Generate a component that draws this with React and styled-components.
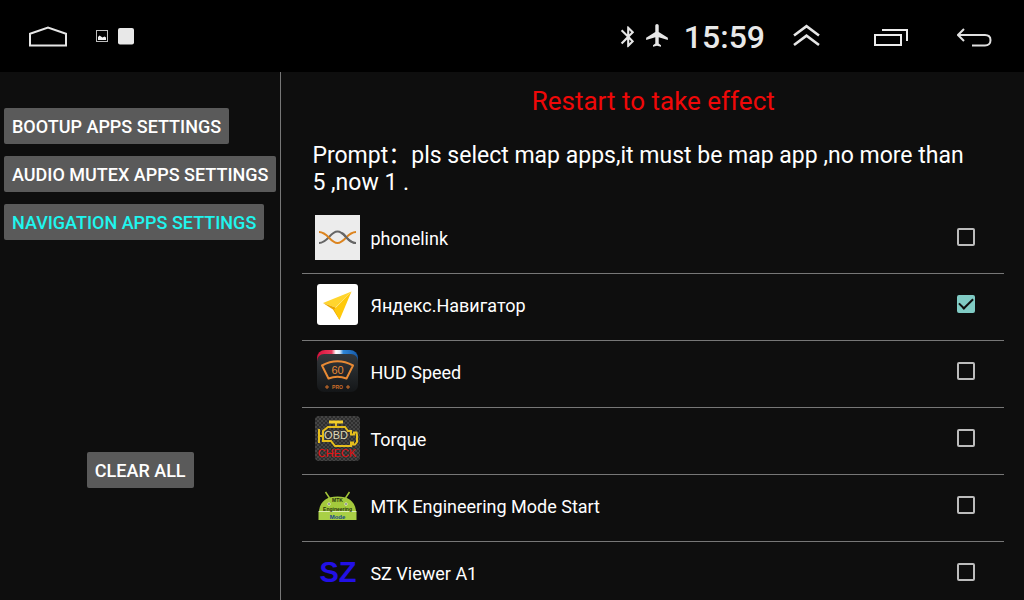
import React, { useState } from "react";
import styled, { createGlobalStyle } from "styled-components";

const TABS = ["Bootup apps settings", "Audio mutex apps settings", "Navigation apps settings"];

const APPS = [
  { id: "phonelink", name: "phonelink", Icon: PhonelinkIcon },
  { id: "yandex", name: "Яндекс.Навигатор", Icon: NavigatorIcon },
  { id: "hud", name: "HUD Speed", Icon: HudIcon },
  { id: "torque", name: "Torque", Icon: TorqueIcon },
  { id: "mtk", name: "MTK Engineering Mode Start", Icon: MtkIcon },
  { id: "sz", name: "SZ Viewer A1", Icon: SzIcon },
];

function App() {
  const [activeTab, setActiveTab] = useState(2);
  const [selected, setSelected] = useState(["yandex"]);

  const toggle = (id) =>
    setSelected((prev) => (prev.includes(id) ? prev.filter((x) => x !== id) : [...prev, id]));

  return (
    <Page>
      <GlobalStyle />
      <StatusBar />
      <Body>
        <Sidebar>
          {TABS.map((tab, i) => (
            <SettingsButton key={tab} $active={i === activeTab} onClick={() => setActiveTab(i)}>
              {tab}
            </SettingsButton>
          ))}
          <ClearButton onClick={() => setSelected([])}>Clear all</ClearButton>
        </Sidebar>
        <Main>
          <Title>Restart to take effect</Title>
          <Prompt>
            {`Prompt：pls select map apps,it must be map app ,no more than 5 ,now ${selected.length} .`}
          </Prompt>
          <AppList>
            {APPS.map(({ id, name, Icon }) => (
              <AppRow key={id}>
                <AppLabel htmlFor={id}>
                  <Icon />
                  <AppName>{name}</AppName>
                </AppLabel>
                <CheckBox
                  id={id}
                  type="checkbox"
                  checked={selected.includes(id)}
                  onChange={() => toggle(id)}
                />
              </AppRow>
            ))}
          </AppList>
        </Main>
      </Body>
    </Page>
  );
}

export default App;

function StatusBar() {
  return (
    <Bar>
      <NavButton aria-label="Home">
        <svg width="40" height="24" viewBox="0 0 40 24" fill="none" stroke="#e6e6e6" strokeWidth="2">
          <path d="M2 21.500V9.700L20 3.500l18 6.200v11.800z" />
        </svg>
      </NavButton>
      <Notifications>
        <svg width="12" height="24" viewBox="0 0 12 24">
          <rect x="0.500" y="6.500" width="11" height="11" fill="none" stroke="#bdbdbd" />
          <path d="M2 16v-3l1.500-1.500 1.500 1 1.500 1 2-1 1.500 1V16z" fill="#f0f0f0" />
        </svg>
        <svg width="16" height="24" viewBox="0 0 16 24">
          <rect y="4" width="16" height="16.500" rx="2" fill="#e8e8e8" />
        </svg>
      </Notifications>
      <Status>
        <svg width="14" height="24" viewBox="4.200 -0.200 13.300 22.800" fill="#e6e6e6">
          <path d="M17.710 7.710L12 2h-1v7.590L6.410 5 5 6.410 10.590 12 5 17.590 6.410 19 11 14.410V22h1l5.710-5.710-4.300-4.290 4.300-4.290zM13 5.830l1.880 1.880L13 9.590V5.830zm1.880 10.460L13 18.170v-3.760l1.880 1.880z" />
        </svg>
        <svg width="22" height="24" viewBox="2 2 19 21" fill="#e6e6e6">
          <path d="M21 16v-2l-8-5V3.500c0-.830-.670-1.500-1.500-1.500S10 2.670 10 3.500V9l-8 5v2l8-2.500V19l-2 1.500V22l3.500-1 3.500 1v-1.500L13 19v-5.500l8 2.500z" />
        </svg>
        <Clock>15:59</Clock>
      </Status>
      <NavButton aria-label="Expand">
        <svg width="28" height="24" viewBox="0 0 28 24" fill="none" stroke="#e6e6e6" strokeWidth="2.600">
          <path d="M1 11.500L13.500 2.200 26 11.500M1 21L13.500 11.700 26 21" />
        </svg>
      </NavButton>
      <NavButton aria-label="Recent apps">
        <svg width="34" height="24" viewBox="0 0 34 24" fill="none" stroke="#ececec" strokeWidth="2">
          <path d="M1 11h26v10H1zM8 6h25v11" />
        </svg>
      </NavButton>
      <NavButton aria-label="Back">
        <svg width="36" height="24" viewBox="0 0 36 24" fill="none" stroke="#e0e0e0" strokeWidth="2">
          <path d="M7 5L1 11l6 6M1 11h27c3.500 0 5.500 2.200 5.500 5.200s-2 5.300-5.500 5.300H15" />
        </svg>
      </NavButton>
    </Bar>
  );
}

function PhonelinkIcon() {
  return (
    <AppIcon viewBox="0 0 45 45" fill="none" strokeWidth="2.200">
      <rect width="45" height="45" fill="#ececec" />
      <path d="M4 28c9 0 11-11.500 18.500-11.500S32 28 41 28" stroke="#666" />
      <path d="M4 17c9 0 11 11 18.500 11S32 17 41 17" stroke="#dc841f" />
      <path d="M27 18c5 3 6 10 14 10" stroke="#666" />
    </AppIcon>
  );
}

function NavigatorIcon() {
  return (
    <AppIcon viewBox="0 0 45 45">
      <rect x="2" y="2" width="41" height="41" rx="3" fill="#fff" />
      <path d="M36.500 9.500L8 21l12.500 4.500z" fill="#ffd52e" />
      <path d="M8 21l12.500 4.500 4 12.500-6.500-10.500z" fill="#e9a500" />
      <path d="M36.500 9.500L19 27.500l5.500 10.500z" fill="#ffc90b" />
    </AppIcon>
  );
}

function HudIcon() {
  return (
    <AppIcon viewBox="0 0 45 45">
      <defs>
        <linearGradient id="hudLight">
          <stop offset="0" stopColor="#d8103c" />
          <stop offset="0.360" stopColor="#e83a5c" />
          <stop offset="0.460" stopColor="#fff" />
          <stop offset="0.560" stopColor="#dbe9f8" />
          <stop offset="0.640" stopColor="#2e86d8" />
          <stop offset="1" stopColor="#1458a8" />
        </linearGradient>
        <linearGradient id="hudBody" x2="0" y2="1">
          <stop offset="0" stopColor="#33383c" />
          <stop offset="1" stopColor="#141618" />
        </linearGradient>
      </defs>
      <rect x="2" y="1" width="41" height="34" rx="8" fill="url(#hudLight)" />
      <rect x="2" y="5" width="41" height="38" rx="7" fill="url(#hudBody)" />
      <path
        d="M7 16.500q15.500-8.500 31 0l-6.500 13q-9-3.500-18 0z"
        fill="none"
        stroke="#e88a34"
        strokeWidth="2"
        strokeLinejoin="round"
      />
      <IconText x="22.500" y="24.500" fontSize="11" fill="#e88a34">60</IconText>
      <IconText x="22.500" y="40" fontSize="5" fontWeight="700" fill="#d0702a">PRO</IconText>
      <path d="M12 36v4M10 38h4M33 36v4M31 38h4" stroke="#d0702a" />
    </AppIcon>
  );
}

function TorqueIcon() {
  return (
    <AppIcon viewBox="0 0 45 45">
      <defs>
        <pattern id="carbon" width="4" height="4" patternUnits="userSpaceOnUse">
          <rect width="4" height="4" fill="#444" />
          <path d="M0 0h2v2H0zM2 2h2v2H2z" fill="#2e2e2e" />
        </pattern>
      </defs>
      <rect width="45" height="45" rx="4" fill="url(#carbon)" />
      <path
        d="M21 6v4M4 13v14M4 20h4M8 23.500V15l5-4h17l3 4h3v3.500h3v-2h2.500L42 19v7l-2 2.500h-2v-2h-2v3.500H20l-4-5H8z"
        fill="none"
        stroke="#e5bd1c"
        strokeWidth="2"
      />
      <path d="M14 6h14" stroke="#f2ce2c" strokeWidth="3" />
      <IconText x="21" y="22.500" fontSize="11" fill="#ddd6b4">OBD</IconText>
      <IconText x="22" y="41" fontSize="11" fill="#e81010">CHECK</IconText>
    </AppIcon>
  );
}

function MtkIcon() {
  return (
    <AppIcon viewBox="0 0 45 45">
      <path d="M10.500 9l4 6M34.500 9l-4 6" stroke="#a4c639" strokeWidth="1.500" />
      <path d="M4 28C5 18 12 13.500 22.500 13.500S40 18 41 28z" fill="#a4c93c" />
      <rect x="3.500" y="29" width="38" height="8" fill="#a9d046" />
      <path d="M3.500 28.500h38" stroke="#dfeeb4" />
      <circle cx="14" cy="21" r="1.500" fill="#fff" />
      <circle cx="31" cy="21" r="1.500" fill="#fff" />
      <circle cx="14" cy="21" r="0.800" fill="#222" />
      <circle cx="31" cy="21" r="0.800" fill="#222" />
      <IconText x="22.500" y="18.500" fontSize="5" fontWeight="700" fill="#26330c">MTK</IconText>
      <IconText x="22.500" y="27.500" fontSize="5" fontWeight="700" fill="#26330c">Engineering</IconText>
      <IconText x="22.500" y="35.500" fontSize="6" fontWeight="700" fill="#17478a">Mode</IconText>
    </AppIcon>
  );
}

function SzIcon() {
  return (
    <AppIcon viewBox="0 0 45 45">
      <IconText x="23" y="32" fontSize="29" fontWeight="700" fill="#2210e6">SZ</IconText>
    </AppIcon>
  );
}

const GlobalStyle = createGlobalStyle`
  * {
    box-sizing: border-box;
  }

  body {
    margin: 0;
    background: #0e0e0e;
    color: #fff;
    font-family: Roboto, "Noto Sans CJK SC", sans-serif;
  }

  button {
    border: none;
    padding: 0;
    cursor: pointer;
    font-family: inherit;
  }
`;

const Page = styled.div`
  display: flex;
  flex-direction: column;
  height: 100vh;
  overflow: hidden;
`;

const Bar = styled.header`
  display: flex;
  align-items: center;
  flex-shrink: 0;
  height: 72px;
  padding: 0 7px 0 6px;
  background: #000;
`;

const NavButton = styled.button`
  display: flex;
  align-items: center;
  justify-content: center;
  width: 84px;
  height: 72px;
  background: none;
`;

const Notifications = styled.div`
  display: flex;
  gap: 10px;
  padding-left: 6px;
`;

const Status = styled.div`
  display: flex;
  align-items: center;
  gap: 12px;
  margin-left: auto;
`;

const Clock = styled.time`
  padding: 2px 0 0 4px;
  font-size: 32px;
  font-weight: 500;
  line-height: 36px;
  color: #e8e8e8;
`;

const Body = styled.div`
  display: flex;
  flex: 1;
  min-height: 0;
`;

const Sidebar = styled.nav`
  display: flex;
  flex-direction: column;
  align-items: flex-start;
  gap: 12px;
  padding: 36px 4px 112px;
  border-right: 1px solid #777;
`;

const SettingsButton = styled.button`
  height: 36px;
  padding: 2px 8px 0;
  border-radius: 2px;
  background: #5a5a5a;
  color: ${(props) => (props.$active ? "#1ff5ee" : "#fff")};
  font-size: 18px;
  font-weight: 500;
  line-height: 34px;
  text-transform: uppercase;
  white-space: nowrap;
`;

const ClearButton = styled(SettingsButton)`
  align-self: center;
  margin-top: auto;
`;

const Main = styled.main`
  flex: 1;
  min-width: 0;
  padding: 12px 20px 0 21px;
`;

const Title = styled.h1`
  margin: 0;
  color: #f00808;
  font-size: 26px;
  font-weight: 400;
  line-height: 34px;
  text-align: center;
`;

const Prompt = styled.p`
  margin: 0;
  padding: 24px 28px 11px 10px;
  font-size: 23px;
  line-height: 27px;
`;

const AppList = styled.ul`
  margin: 0;
  padding: 0;
  list-style: none;
`;

const AppRow = styled.li`
  display: flex;
  align-items: flex-start;
  padding: 8px 29px 13px 13px;
  border-bottom: 1px solid #777;
`;

const AppLabel = styled.label`
  display: flex;
  flex: 1;
  align-items: center;
  gap: 10px;
  cursor: pointer;
`;

const AppIcon = styled.svg`
  width: 45px;
  height: 45px;
`;

const IconText = styled.text`
  font-family: "Liberation Sans", sans-serif;
  text-anchor: middle;
`;

const AppName = styled.span`
  padding-top: 2px;
  font-size: 18px;
  line-height: 24px;
`;

const CheckBox = styled.input`
  appearance: none;
  display: grid;
  place-items: center;
  width: 18px;
  height: 18px;
  margin: 13px 0 0;
  border: 2px solid #bcbcbc;
  border-radius: 2px;
  cursor: pointer;

  &:checked {
    border-color: #80cbc4;
    background: #80cbc4;
  }

  &:checked::after {
    content: "";
    width: 12px;
    height: 6px;
    border: solid #0e0e0e;
    border-width: 0 0 2px 2px;
    transform: translateY(-2px) rotate(-45deg);
  }
`;
